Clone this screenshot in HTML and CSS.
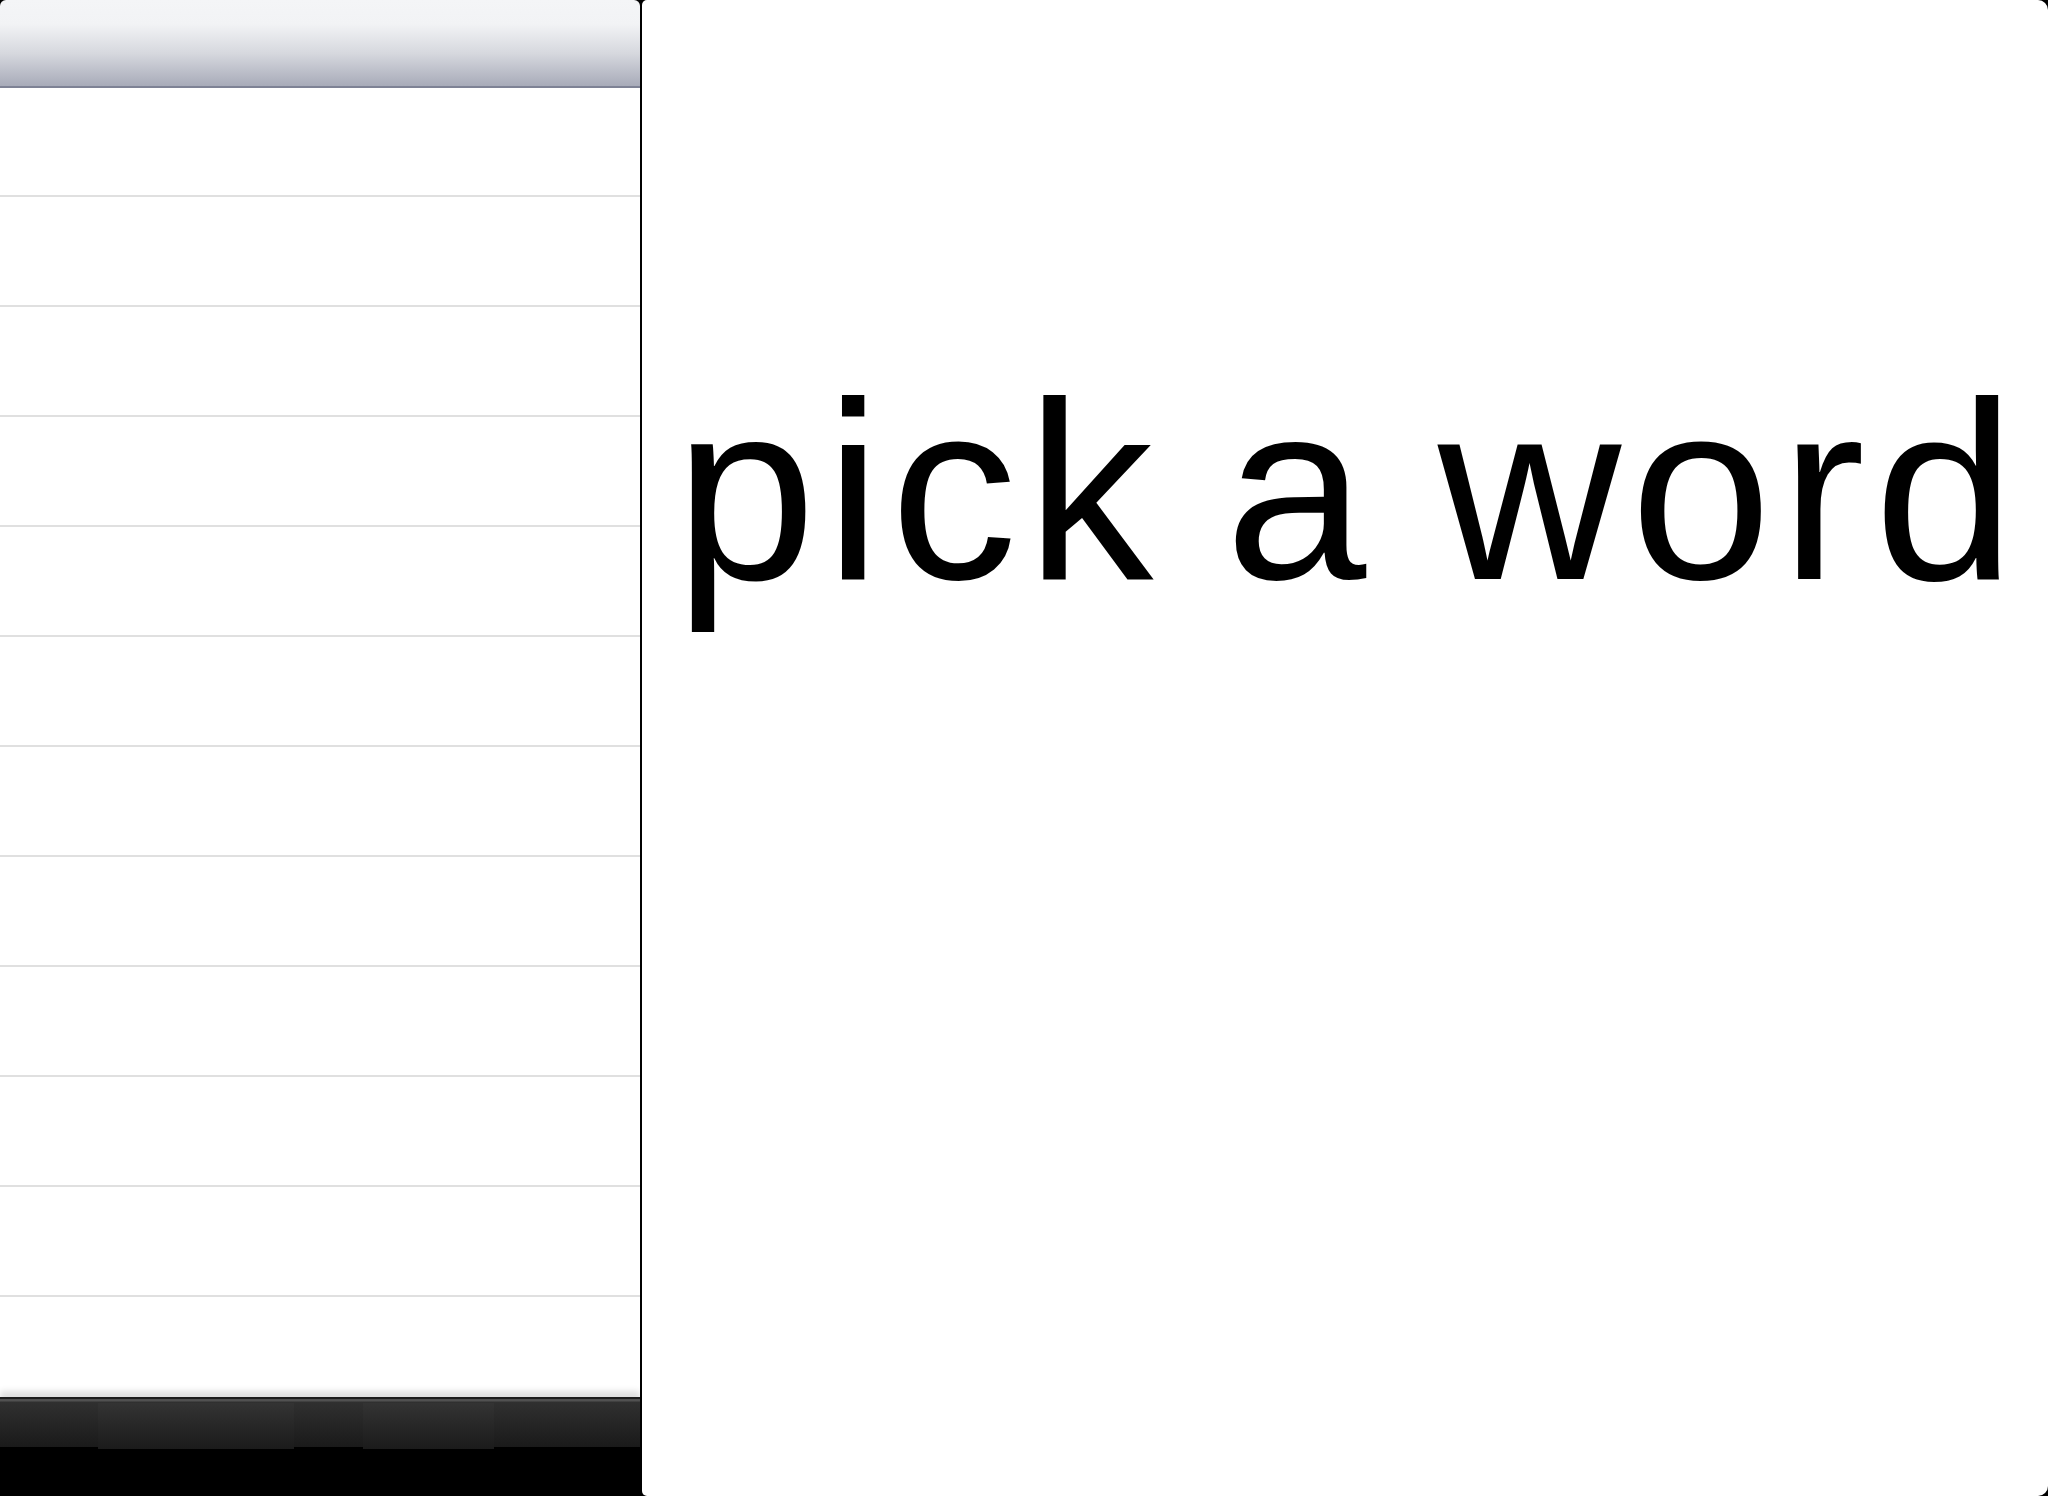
FILE: index.html
```html
<!DOCTYPE html>
<html>
<head>
<meta charset="utf-8">
<link rel="stylesheet" href="styles.css">
</head>
<body>
<div class="app">
  <div class="master">
    <div class="header"></div>
    <div class="list">
      <div class="row first"></div><div class="row"></div><div class="row"></div><div class="row"></div>
      <div class="row"></div><div class="row"></div><div class="row"></div><div class="row"></div>
      <div class="row"></div><div class="row"></div><div class="row"></div><div class="row"></div>
    </div>
    <div class="toolbar">
      <div class="seg seg1"></div>
      <div class="seg seg2"></div>
    </div>
    <div class="footer"></div>
  </div>
  <div class="detail">
    <div class="word">pick a word</div>
  </div>
</div>
</body>
</html>
```
FILE: styles.css
```css
html, body {
  margin: 0;
  padding: 0;
  background: #000;
}
body {
  width: 2048px;
  height: 1496px;
  overflow: hidden;
}
.app {
  display: flex;
  gap: 2px;
  height: 1496px;
}
.master {
  width: 640px;
  flex: none;
  display: flex;
  flex-direction: column;
  border-radius: 6px 6px 0 0;
  overflow: hidden;
  background: #000;
}
.header {
  height: 86px;
  flex: none;
  border-bottom: 2px solid #7e8295;
  background: linear-gradient(to bottom, #f4f5f7 0%, #f2f3f5 28%, #d6d8de 62%, #a8abb9 100%);
}
.list {
  height: 1309px;
  flex: none;
  background: #fff;
  overflow: hidden;
}
.row {
  height: 110px;
  box-sizing: border-box;
  border-bottom: 2px solid #e0e0e0;
  background: #fff;
}
.row.first {
  height: 109px;
}
.toolbar {
  height: 50px;
  flex: none;
  box-sizing: border-box;
  border-top: 2px solid #1e1e1e;
  background: linear-gradient(to bottom, #515151 0px, #515151 2px, #303030 3px, #1a1a1a 100%);
  box-shadow: 0 -6px 6px rgba(0, 0, 0, 0.12);
  position: relative;
  display: flex;
  align-items: flex-start;
}
.seg {
  margin-top: 4px;
  height: 46px;
  background: linear-gradient(to bottom, #333 0%, #1b1b1b 100%);
}
.seg1 {
  margin-left: 98px;
  width: 196px;
}
.seg2 {
  margin-left: 69px;
  width: 131px;
}
.footer {
  flex: 1;
  background: #000;
}
.detail {
  flex: 1;
  background: #fff;
  border-radius: 5px 10px 10px 5px;
  overflow: hidden;
}
.word {
  font-family: "Liberation Sans", Arial, sans-serif;
  font-size: 254px;
  line-height: 256px;
  letter-spacing: 9px;
  word-spacing: -17px;
  color: #000;
  text-align: center;
  padding-top: 363px;
  padding-left: 9px;
  white-space: nowrap;
}
```
